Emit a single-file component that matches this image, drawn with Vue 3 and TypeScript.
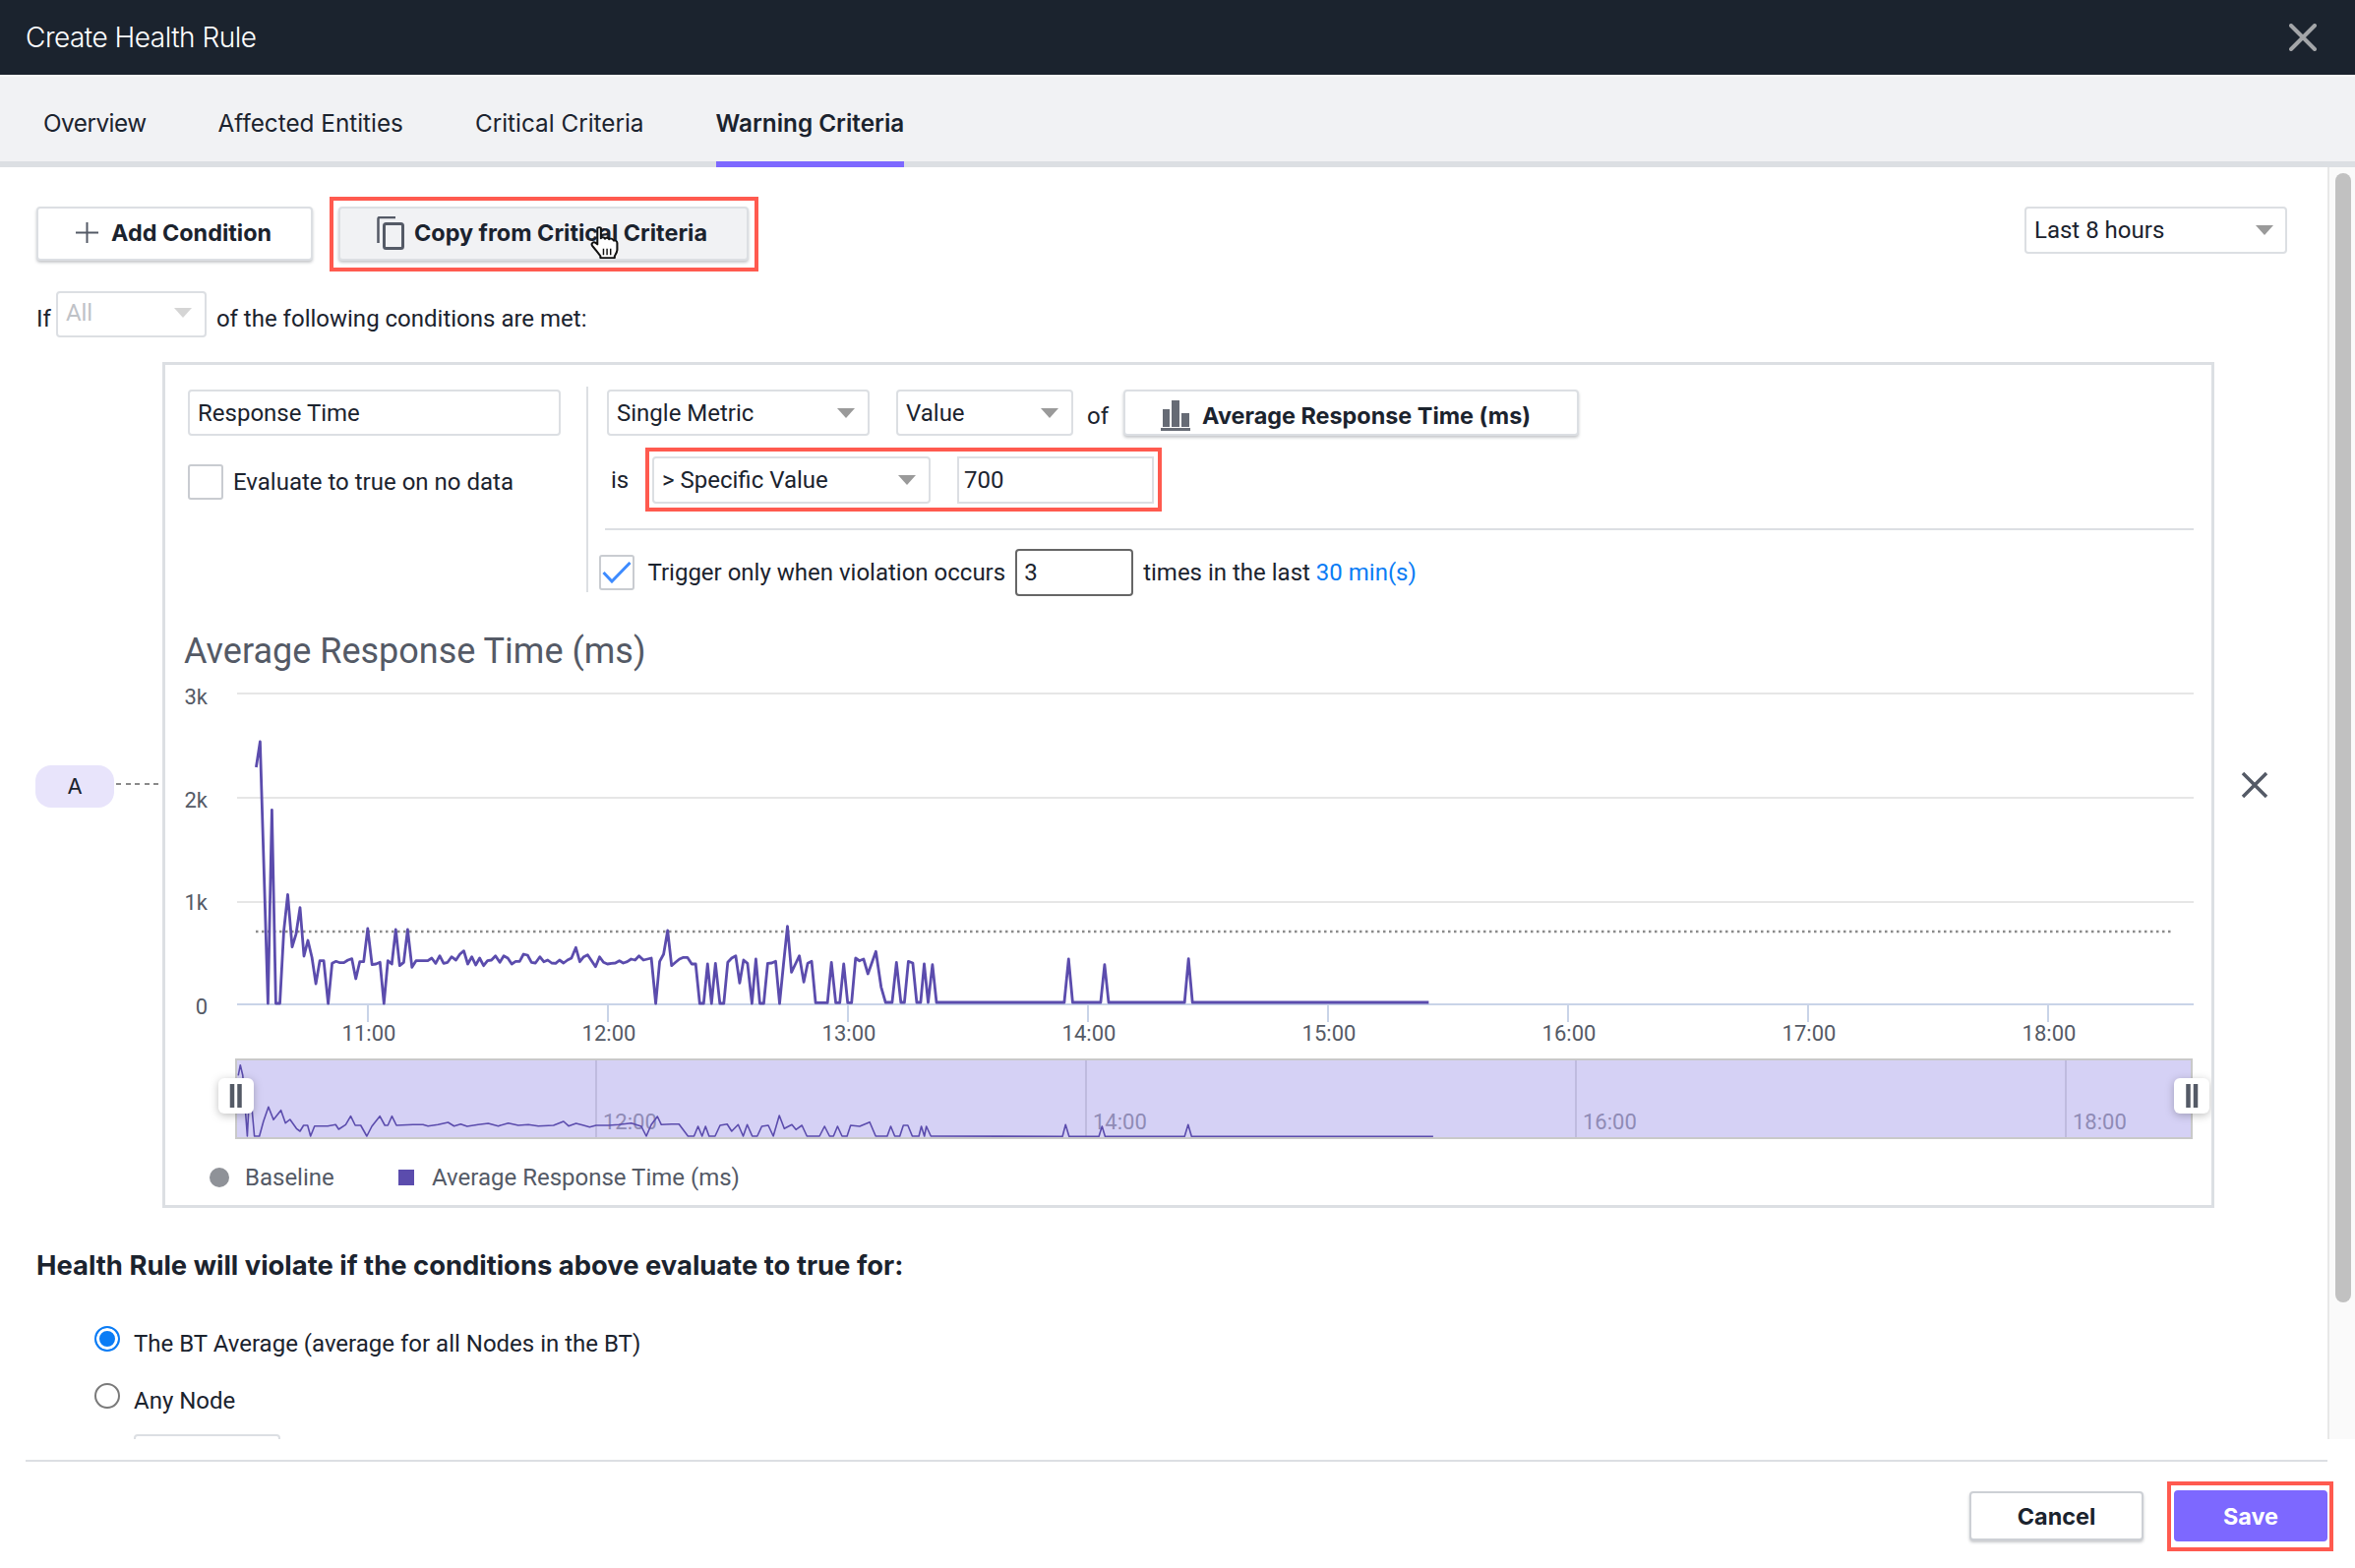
<script setup lang="ts">
type Pt = [number, number]

// points read off the chart, in crop coordinates, converted to page px below
const mainA: Pt[] = [[180,300],[189,222],[207,1020],[216,430],[225,1020],[234,1020],[243,800],[252,688],[262,848],[271,808],[280,728],[289,876],[298,828],[307,880],[316,960],[325,890],[334,890],[344,1020],[353,898],[362,892],[371,896],[380,896],[389,888],[398,884],[407,945],[416,893],[425,893],[434,792],[444,902],[453,900],[462,895],[471,1020],[480,890],[489,900],[498,795],[507,905],[516,895],[525,795],[535,910],[544,890],[553,890],[562,890],[571,890],[580,882],[589,898],[598,875],[607,898],[616,895],[625,878],[635,888],[644,870],[653,860],[662,900],[671,878],[680,903],[689,882],[698,905],[707,890],[716,888],[725,875],[735,895],[744,875],[753,882],[762,900],[771,892],[780,892],[789,870],[798,873],[807,895],[816,897],[826,878],[835,893],[844,888],[853,897],[862,898],[871,888],[880,897],[889,888],[898,882],[908,850],[917,893],[926,878],[935,872],[944,890],[953,908],[962,878],[971,895],[980,900],[989,898],[998,897],[1007,890],[1016,897],[1025,893],[1034,885],[1043,888],[1052,875],[1062,888],[1071,885],[1080,882],[1090,1020],[1099,892],[1108,870],[1117,798],[1126,905],[1135,895],[1144,885],[1153,880],[1162,880],[1172,900],[1181,900],[1190,1020],[1199,1020],[1208,900],[1217,1020],[1226,898],[1236,1020],[1245,1020],[1254,895],[1263,882],[1272,875],[1281,958],[1290,888],[1299,898],[1309,1020],[1318,885],[1327,1020],[1336,1020],[1345,898],[1354,897],[1363,892],[1372,1020],[1381,900],[1390,785],[1399,925],[1408,900],[1417,875],[1427,955],[1436,898],[1445,892],[1454,1018],[1481,1018],[1490,895],[1500,1018],[1509,1018],[1518,900],[1527,1018],[1536,1018],[1545,884],[1554,890]]
const mainB: Pt[] = [[22,222],[30,230],[40,225],[50,270],[68,202],[80,310],[90,357],[105,357],[115,235],[125,357],[133,357],[142,232],[152,237],[161,357],[170,357],[178,240],[187,357],[197,242],[206,357],[497,357],[507,225],[516,357],[580,357],[589,242],[598,357],[771,357],[780,224],[789,357],[1327,357]]
const navA: Pt[] = [[122,100],[126,68],[131,100],[140,285],[145,130],[154,285],[164,285],[172,240],[182,196],[192,235],[207,206],[216,245],[225,234],[238,262],[245,270],[252,252],[260,252],[266,285],[274,254],[300,254],[316,250],[322,264],[336,250],[346,224],[355,252],[366,252],[378,285],[388,255],[404,224],[414,252],[420,252],[428,224],[437,252],[470,250],[490,250],[500,254],[520,250],[540,243],[552,254],[565,248],[578,255],[600,250],[620,246],[640,254],[660,245],[680,252],[700,250],[720,254],[750,252],[770,240],[780,254],[795,246],[810,252],[822,257],[835,252],[860,252],[880,250],[905,245],[925,255],[935,285],[945,250],[957,225],[965,250],[985,248],[1000,248],[1018,285],[1030,285],[1038,255],[1046,285],[1053,255],[1060,285],[1072,285],[1082,252],[1096,248],[1105,270],[1118,250],[1128,285],[1136,250],[1146,285],[1156,285],[1165,255],[1178,252],[1188,285],[1200,222],[1210,262],[1225,250],[1233,265],[1245,252],[1255,285],[1280,285],[1290,255],[1300,285],[1308,285],[1316,255],[1325,285],[1335,285],[1342,252],[1360,255],[1380,242],[1392,285],[1415,285],[1422,255],[1430,285],[1440,285],[1447,252],[1456,252],[1465,285],[1478,285],[1483,255],[1489,285],[1493,255],[1502,285]]
const navB: Pt[] = [[493,766],[500,730],[508,766],[576,766],[583,735],[590,766],[771,766],[779,730],[787,766],[1337,766]]

const conv = (pts: Pt[], ox: number, oy: number, sx: number) =>
  pts.map(([x, y]) => `${(ox + x / sx).toFixed(1)},${(oy + y / 3).toFixed(1)}`)

const mainPoints = [...conv(mainA, 180, 680, 2.24), ...conv(mainB, 860, 900, 2.24)].join(' ')
const navPoints = [...conv(navA, 180, 1060, 1.96), ...conv(navB, 860, 900, 2.24)].join(' ')

const tabs = ['Overview', 'Affected Entities', 'Critical Criteria', 'Warning Criteria']
const yTicks = [
  { label: '3k', y: 705, ty: 716 },
  { label: '2k', y: 811, ty: 821 },
  { label: '1k', y: 917, ty: 925 },
  { label: '0', y: 1021, ty: 1031 }
]
const xTicks = ['11:00', '12:00', '13:00', '14:00', '15:00', '16:00', '17:00', '18:00'].map((label, i) => ({
  label,
  x: 374 + i * 244
}))
const navTicks = [
  { label: '12:00', x: 606 },
  { label: '14:00', x: 1104 },
  { label: '16:00', x: 1602 },
  { label: '18:00', x: 2100 }
]
</script>

<template>
  <div class="page">
    <header class="top">
      <span class="top-title">Create Health Rule</span>
      <svg class="top-close" width="28" height="28" viewBox="0 0 28 28">
        <path d="M2 2L26 26M26 2L2 26" stroke="#a3a5a8" stroke-width="4" stroke-linecap="round" />
      </svg>
    </header>

    <nav class="tabs">
      <a v-for="(t, i) in tabs" :key="t" :class="['tab', { active: i === 3 }]">{{ t }}</a>
    </nav>

    <div class="body">
      <main class="main">
        <div class="toolbar">
          <button class="btn add">
            <svg width="23" height="21" viewBox="0 0 23 21">
              <path d="M11.5 0V21M0 10.5H23" stroke="#545a66" stroke-width="2" />
            </svg>
            Add Condition
          </button>
          <div class="mark mark-copy">
            <button class="btn copy">
              <svg width="28" height="34" viewBox="0 0 28 34">
                <path d="M1.5 27V2.5A1.5 1.5 0 0 1 3 1H19" fill="none" stroke="#545a66" stroke-width="2.5" />
                <rect x="7.5" y="7.5" width="19" height="25" rx="2" fill="none" stroke="#545a66" stroke-width="3" />
              </svg>
              Copy from Critical Criteria
            </button>
            <svg class="cursor" width="31" height="34" viewBox="0 0 30 36" preserveAspectRatio="none">
              <path
                d="M8 2.5C8 .8 11.5 .8 11.5 2.5V13C12 11.500 15 11.500 15.500 13.500C16 12 19 12 19.500 14C20 13 23.500 13 24 15.500C25 15 27.500 15.500 27.500 18V25C27.500 28 26 30 25 32V34H11V32C9 29 6 25 3 21C1.500 18.500 4 16 6.500 18L8 19.500Z"
                fill="#fff"
                stroke="#111"
                stroke-width="2"
                stroke-linejoin="round"
              />
              <path d="M14 24V31M17.500 24V31M21 24V31" stroke="#111" stroke-width="1.400" />
            </svg>
          </div>
          <div class="select range">
            <span>Last 8 hours</span><i class="caret"></i>
          </div>
        </div>

        <div class="if-row">
          <span class="if-text">If</span>
          <div class="select all"><span>All</span><i class="caret light"></i></div>
          <span class="if-text">of the following conditions are met:</span>
        </div>

        <div class="condition">
          <div class="pill">A</div>
          <div class="pill-link"></div>
          <section class="box">
            <div class="box-top">
              <div class="box-left">
                <div class="field name">Response Time</div>
                <label class="check-row">
                  <span class="check"></span>
                  Evaluate to true on no data
                </label>
              </div>
              <div class="box-right">
                <div class="line">
                  <div class="select metric"><span>Single Metric</span><i class="caret"></i></div>
                  <div class="select value"><span>Value</span><i class="caret"></i></div>
                  <span class="of">of</span>
                  <button class="btn metric-btn">
                    <svg width="30" height="31" viewBox="0 0 30 31">
                      <path d="M2 9H9V27H2ZM11 0H19V27H11ZM21 13H29V27H21ZM0 28H30V31H0Z" fill="#666b75" />
                    </svg>
                    Average Response Time (ms)
                  </button>
                </div>
                <div class="line second">
                  <span class="is">is</span>
                  <div class="mark mark-value">
                    <div class="select specific"><span>&gt; Specific Value</span><i class="caret"></i></div>
                    <div class="field threshold">700</div>
                  </div>
                </div>
                <hr class="rule" />
                <div class="line third">
                  <span class="check checked">
                    <svg width="30" height="22" viewBox="0 0 30 22">
                      <path d="M1.500 11L10 20L28.500 1" fill="none" stroke="#3d8bff" stroke-width="3" />
                    </svg>
                  </span>
                  <span class="trigger">Trigger only when violation occurs</span>
                  <div class="field times">3</div>
                  <span class="after">times in the last <a class="link">30 min(s)</a></span>
                </div>
              </div>
            </div>

            <h2 class="chart-title">Average Response Time (ms)</h2>

            <svg class="chart" width="2080" height="537" viewBox="168 688 2080 537">
              <g v-for="t in yTicks" :key="t.label">
                <line x1="241" x2="2230" :y1="t.y" :y2="t.y" :stroke="t.y === 1021 ? '#c9d4e8' : '#e6e6e6'" stroke-width="2" />
                <text x="211" :y="t.ty" text-anchor="end" class="axis">{{ t.label }}</text>
              </g>
              <g v-for="t in xTicks" :key="t.label">
                <line :x1="t.x" :x2="t.x" y1="1021" y2="1039" stroke="#c9d4e8" stroke-width="2" />
                <text :x="t.x + 1" y="1058" text-anchor="middle" class="axis">{{ t.label }}</text>
              </g>
              <line x1="260" x2="2210" y1="947" y2="947" stroke="#8a8a8a" stroke-width="2.500" stroke-dasharray="2.500 3.500" />
              <polyline :points="mainPoints" fill="none" stroke="#5b4cad" stroke-width="2.800" stroke-linejoin="round" />

              <rect x="240" y="1077" width="1988" height="80" fill="#d5d1f5" stroke="#c9c9c9" stroke-width="2" />
              <g v-for="t in navTicks" :key="t.label">
                <line :x1="t.x" :x2="t.x" y1="1078" y2="1156" stroke="#bfbbdf" stroke-width="2" />
                <text :x="t.x + 7" y="1148" class="nav-label">{{ t.label }}</text>
              </g>
              <polyline :points="navPoints" fill="none" stroke="#5b4cad" stroke-width="1.600" stroke-linejoin="round" />
              <g class="grip">
                <rect x="222" y="1096" width="36" height="36" rx="6" fill="#fff" />
                <path d="M236 1102V1126M243.500 1102V1126" stroke="#545a66" stroke-width="4.500" />
              </g>
              <g class="grip">
                <rect x="2210" y="1096" width="36" height="36" rx="6" fill="#fff" />
                <path d="M2224.500 1102V1126M2232 1102V1126" stroke="#545a66" stroke-width="4.500" />
              </g>

              <ellipse cx="223" cy="1197" rx="10" ry="10" fill="#8f9298" />
              <text x="249" y="1205" class="legend">Baseline</text>
              <rect x="405" y="1189" width="16" height="16" fill="#5b4cad" />
              <text x="439" y="1205" class="legend">Average Response Time (ms)</text>
            </svg>
          </section>
          <svg class="remove" width="28" height="28" viewBox="0 0 28 28">
            <path d="M2 2L26 26M26 2L2 26" stroke="#545a66" stroke-width="3.500" />
          </svg>
        </div>

        <h3 class="violate">Health Rule will violate if the conditions above evaluate to true for:</h3>

        <div class="radio-row first">
          <span class="radio on"></span>
          <span>The BT Average (average for all Nodes in the BT)</span>
        </div>
        <div class="radio-row">
          <span class="radio"></span>
          <span>Any Node</span>
        </div>
        <div class="stub"></div>
      </main>
      <div class="scroll"><div class="thumb"></div></div>
    </div>

    <footer class="foot">
      <button class="btn cancel">Cancel</button>
      <div class="mark mark-save">
        <button class="btn save">Save</button>
      </div>
    </footer>
  </div>
</template>

<style scoped>
.page {
  width: 2394px;
  height: 1594px;
  display: flex;
  flex-direction: column;
  overflow: hidden;
  background: #fff;
  color: #1b232e;
  font-family: Roboto, "Liberation Sans", sans-serif;
  font-size: 24px;
}

.top {
  height: 76px;
  flex: none;
  background: #1b232e;
  display: flex;
  align-items: center;
  justify-content: space-between;
  padding: 0 39px 0 26px;
  border-bottom: 2px solid #f8f8f8;
  box-sizing: content-box;
}
.top-title {
  color: #fff;
  font-family: Inter, sans-serif;
  font-weight: 300;
  font-size: 28px;
  letter-spacing: -0.5px;
}

.tabs {
  height: 86px;
  flex: none;
  display: flex;
  gap: 73px;
  padding-left: 44px;
  background: #f1f2f4;
  border-bottom: 6px solid #dcdfe3;
}
.tab {
  height: 92px;
  line-height: 94px;
  font-family: Inter, sans-serif;
  font-size: 24.3px;
  box-sizing: border-box;
}
.tab:first-child {
  letter-spacing: -0.5px;
}
.tab.active {
  font-weight: 600;
  border-bottom: 6px solid #7d68ff;
}

.body {
  height: 1293px;
  flex: none;
  display: flex;
}
.main {
  flex: 1;
  min-width: 0;
  overflow: hidden;
}
.scroll {
  width: 28px;
  flex: none;
  box-sizing: border-box;
  background: #fafafa;
  border-left: 2px solid #e8e8e8;
  padding: 6px 4px 0 6px;
}
.thumb {
  height: 1148px;
  background: #c1c1c1;
  border-radius: 8px;
}

.toolbar {
  display: flex;
  align-items: flex-start;
  padding: 30px 41px 0 37px;
}
.btn {
  font-family: Inter, sans-serif;
  font-weight: 700;
  font-size: 23.4px;
  color: #1b232e;
  background: #fff;
  border: 2px solid #dcdfe3;
  border-radius: 4px;
  box-shadow: 0 2px 3px rgba(27, 35, 46, 0.25);
  display: flex;
  align-items: center;
  box-sizing: border-box;
  padding: 0;
}
.add {
  width: 281px;
  height: 55px;
  margin-top: 10px;
  padding: 0 0 2px 38px;
  gap: 13px;
}
.mark {
  border: 4px solid #ff5a4f;
  box-sizing: border-box;
  flex: none;
}
.mark-copy {
  position: relative;
  margin-left: 17px;
  width: 436px;
  height: 76px;
  padding: 6px 5px;
}
.copy {
  width: 417px;
  height: 55px;
  background: #f1f2f4;
  padding: 0 0 2px 37px;
  gap: 10px;
}
.cursor {
  position: absolute;
  left: 260px;
  top: 26px;
}

.select {
  display: flex;
  align-items: center;
  justify-content: space-between;
  box-sizing: border-box;
  border: 2px solid #dcdfe3;
  border-radius: 4px;
  height: 47px;
  padding: 0 13px 0 8px;
  background: #fff;
  flex: none;
}
.caret {
  width: 0;
  height: 0;
  border-left: 9px solid transparent;
  border-right: 9px solid transparent;
  border-top: 10px solid #9a9a9a;
}
.caret.light {
  border-top-color: #d5d5d5;
}
.range {
  margin: 10px 0 0 auto;
  width: 267px;
  height: 48px;
  padding-right: 12px;
}

.if-row {
  display: flex;
  align-items: center;
  gap: 6px;
  margin-top: 20px;
  padding-left: 37px;
  height: 47px;
}
.if-text {
  padding-top: 8px;
}
.all {
  width: 153px;
  color: #bfc2c7;
  margin-right: 4px;
  margin-left: -1px;
  padding-bottom: 3px;
}

.condition {
  display: flex;
  align-items: center;
  margin-top: 25px;
  padding-left: 36px;
}
.pill {
  width: 80px;
  height: 43px;
  flex: none;
  margin-top: 2px;
  border-radius: 16px;
  background: #e8e4fb;
  text-align: center;
  line-height: 43px;
  font-family: Inter, sans-serif;
  font-size: 22px;
}
.pill-link {
  width: 45px;
  height: 2px;
  flex: none;
  margin: -3px 0 0 2px;
  background: repeating-linear-gradient(90deg, #8a8a8a 0 5px, transparent 5px 9.5px);
}
.box {
  width: 2086px;
  height: 860px;
  flex: none;
  box-sizing: border-box;
  border: 3px solid #dcdfe3;
  padding-top: 22px;
  margin-left: 2px;
}
.remove {
  margin-left: 27px;
  flex: none;
}

.box-top {
  display: flex;
  height: 209px;
}
.box-left {
  width: 428px;
  flex: none;
  padding: 3px 0 0 23px;
  box-sizing: border-box;
}
.field {
  box-sizing: border-box;
  border: 2px solid #dcdfe3;
  border-radius: 4px;
  height: 47px;
  line-height: 45px;
  padding-left: 8px;
}
.name {
  width: 379px;
}
.check-row {
  display: flex;
  align-items: center;
  gap: 10px;
  margin-top: 29px;
}
.check {
  width: 36px;
  height: 36px;
  flex: none;
  box-sizing: border-box;
  border: 2px solid #c9ccd1;
  border-radius: 3px;
  background: #fff;
  display: flex;
  align-items: center;
  justify-content: center;
}
.box-right {
  flex: 1;
  border-left: 2px solid #dcdfe3;
  padding: 3px 0 0 19px;
}
.line {
  display: flex;
  align-items: center;
}
.metric {
  width: 267px;
}
.value {
  width: 180px;
  margin-left: 27px;
}
.of {
  margin-left: 14px;
  margin-top: 6px;
}
.metric-btn {
  width: 463px;
  height: 47px;
  margin-left: 15px;
  padding: 5px 0 0 36px;
  gap: 12px;
}
.second {
  margin-top: 12px;
}
.is {
  margin-left: 4px;
  width: 35px;
}
.mark-value {
  display: flex;
  width: 525px;
  height: 65px;
  padding: 5px 3px;
  gap: 27px;
}
.specific {
  width: 283px;
  height: 48px;
}
.threshold {
  width: 200px;
  height: 48px;
  border-radius: 0;
  padding-left: 5px;
  line-height: 44px;
}
.rule {
  border: 0;
  height: 2px;
  background: #dcdfe3;
  margin: 17px 18px 0 -2px;
}
.third {
  margin: 19px 0 0 -8px;
  height: 48px;
}
.checked {
  padding: 0;
}
.trigger {
  margin-left: 13.500px;
}
.times {
  width: 120px;
  height: 48px;
  margin-left: 10px;
  border-color: #666;
  padding-left: 7px;
  line-height: 44px;
}
.after {
  margin-left: 10px;
}
.link {
  color: #0a7cf5;
}

.chart-title {
  margin: 38px 0 0 19px;
  height: 44px;
  line-height: 44px;
  font-size: 36px;
  font-weight: 400;
  color: #545a66;
}
.chart {
  display: block;
  margin-top: 4px;
}
.axis {
  font-size: 22px;
  fill: #545a66;
}
.nav-label {
  font-size: 22px;
  fill: #8f8bb5;
}
.legend {
  font-size: 24px;
  fill: #545a66;
}
.grip {
  filter: drop-shadow(0 2px 4px rgba(0, 0, 0, 0.25));
}

.violate {
  margin: 40px 0 0 37px;
  height: 36px;
  line-height: 36px;
  font-family: Inter, sans-serif;
  font-size: 27.4px;
  font-weight: 700;
}
.radio-row {
  display: flex;
  gap: 14px;
  height: 36px;
  line-height: 36px;
  margin: 22px 0 0 96px;
}
.radio-row.first {
  margin-top: 44px;
}
.radio {
  width: 26px;
  height: 26px;
  flex: none;
  box-sizing: border-box;
  border-radius: 50%;
  border: 2px solid #7a7a7a;
  background: #fff;
}
.radio.on {
  border-color: #0a7cf5;
  background: #0a7cf5;
  box-shadow: inset 0 0 0 3px #fff;
}
.stub {
  width: 149px;
  height: 47px;
  margin: 16px 0 0 136px;
  box-sizing: border-box;
  border: 2px solid #dcdfe3;
  border-radius: 4px;
}

.foot {
  margin: 21px 28px 0 26px;
  border-top: 2px solid #dcdfe3;
  display: flex;
  justify-content: flex-end;
  align-items: flex-start;
  padding-top: 20px;
  position: relative;
}
.cancel {
  width: 177px;
  height: 50px;
  margin: 10px 24px 0 0;
  justify-content: center;
  border-color: #cdd0d5;
}
.mark-save {
  width: 169px;
  height: 71px;
  padding: 5px 2px 0 3px;
  margin-right: -6px;
}
.save {
  width: 156px;
  height: 52px;
  justify-content: center;
  background: #7d68ff;
  border-color: #7d68ff;
  color: #fff;
  box-shadow: none;
}
</style>

<style>
html,
body {
  margin: 0;
  background: #fff;
}
</style>
